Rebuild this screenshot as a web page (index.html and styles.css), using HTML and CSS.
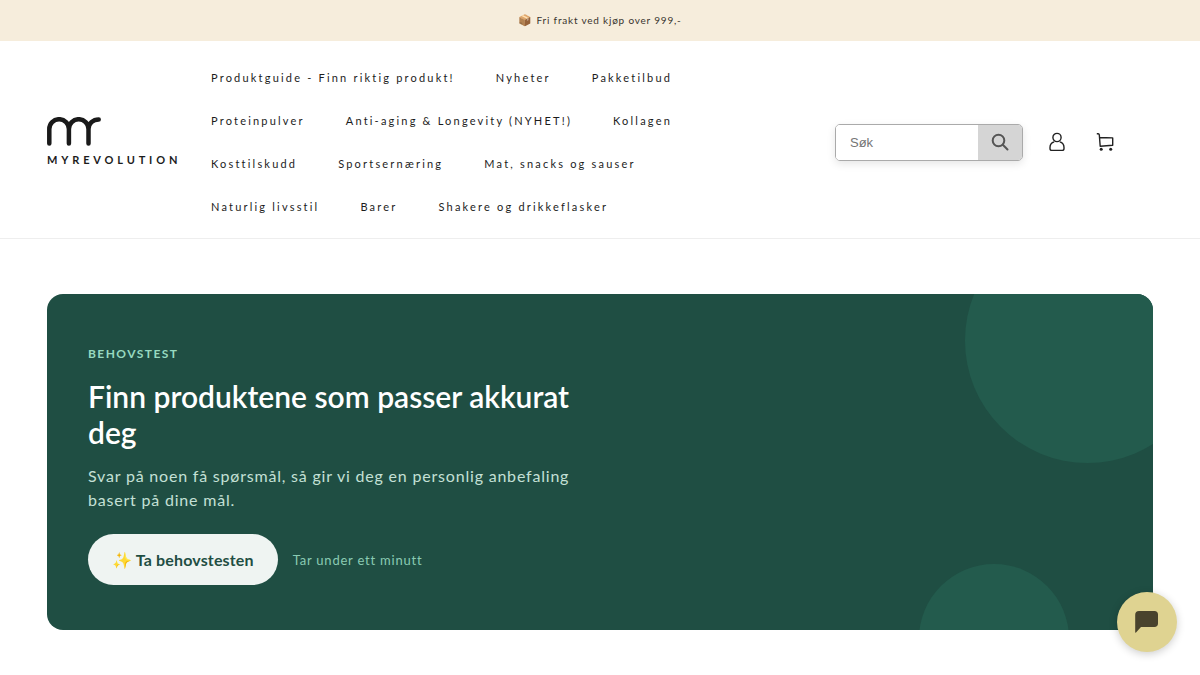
FILE: index.html
```html
<!DOCTYPE html>
<html lang="nb">
<head>
<meta charset="utf-8">
<meta name="viewport" content="width=device-width, initial-scale=1">
<title>MyRevolution</title>
<link rel="stylesheet" href="styles.css">
</head>
<body>
<div class="announcement"><span class="announcement-icon">📦</span> Fri frakt ved kjøp over 999,-</div>
<header class="header">
  <a class="logo" href="#">
    <svg class="logo-mark" viewBox="0 0 54 29" aria-hidden="true"><path d="M2.3 26.5V12a9.8 9.8 0 0 1 19.6 0v14.5M21.9 12a9.8 9.8 0 0 1 19.6 0v14.5M41.5 12c0-5.500 4.500-9.600 10.200-9.600"/></svg>
    <span class="logo-name">MYREVOLUTION</span>
  </a>
  <nav class="nav" aria-label="Hovedmeny">
    <a href="#">Produktguide - Finn riktig produkt!</a>
    <a href="#">Nyheter</a>
    <a href="#">Pakketilbud</a>
    <a href="#">Proteinpulver</a>
    <a href="#">Anti-aging &amp; Longevity (NYHET!)</a>
    <a href="#">Kollagen</a>
    <a href="#">Kosttilskudd</a>
    <a href="#">Sportsernæring</a>
    <a href="#">Mat, snacks og sauser</a>
    <a href="#">Naturlig livsstil</a>
    <a href="#">Barer</a>
    <a href="#">Shakere og drikkeflasker</a>
  </nav>
  <div class="actions">
    <form class="search" role="search">
      <input class="search-input" type="search" placeholder="Søk" aria-label="Søk">
      <button class="search-button" type="submit" aria-label="Utfør søk">
        <svg width="18" height="18" viewBox="0 0 18 18" aria-hidden="true"><circle cx="7.500" cy="7.500" r="5.800"/><path d="m11.800 11.800 4.700 4.700"/></svg>
      </button>
    </form>
    <a class="action" href="#" aria-label="Logg inn">
      <svg width="18" height="20" viewBox="0 0 18 20" aria-hidden="true"><circle cx="9" cy="5.500" r="4.100"/><path d="M6.200 9.900C3.700 10.500 2 13 2 15.600v.9c0 1.200.7 1.900 1.900 1.900h10.200c1.200 0 1.900-.7 1.900-1.900v-.9c0-2.600-1.700-5.100-4.200-5.700"/></svg>
    </a>
    <a class="action" href="#" aria-label="Handlekurv">
      <svg width="18" height="20" viewBox="0 0 18 20" aria-hidden="true"><path d="M.8 1.700h1.400c.7 0 1 .4 1.100 1.100l.9 11.400 12.500-.9V5.900L3.600 5.500"/><circle class="wheel" cx="5.200" cy="17.300" r="1.500"/><circle class="wheel" cx="14.700" cy="17.300" r="1.500"/></svg>
    </a>
  </div>
</header>
<main class="main">
  <section class="hero">
    <div class="hero-content">
      <p class="eyebrow">BEHOVSTEST</p>
      <h1 class="hero-title">Finn produktene som passer akkurat deg</h1>
      <p class="hero-text">Svar på noen få spørsmål, så gir vi deg en personlig anbefaling basert på dine mål.</p>
      <div class="hero-cta">
        <a class="cta" href="#">✨ Ta behovstesten</a>
        <span class="cta-note">Tar under ett minutt</span>
      </div>
    </div>
  </section>
</main>
<button class="chat" type="button" aria-label="Åpne chat">
  <svg width="24" height="22" viewBox="0 0 24 22" aria-hidden="true"><path d="M4 0h15.500c2.200 0 3.500 1.300 3.500 3.500v9c0 2.200-1.300 3.500-3.500 3.500H6l-5 5.500c-.4.400-.8.200-.8-.3V4C.2 1.500 1.500 0 4 0Z"/></svg>
</button>
</body>
</html>
```
FILE: styles.css
```css
* {
  box-sizing: border-box;
}

body {
  margin: 0;
  background: #fff;
  color: #1c1c1c;
  font-family: Lato, "Open Sans", sans-serif;
}

a {
  color: inherit;
  text-decoration: none;
}

p,
h1 {
  margin: 0;
}

.announcement {
  padding: 10px 20px 11px;
  background: #f6eddc;
  color: #38342e;
  font-size: 10px;
  line-height: 20px;
  letter-spacing: 0.08em;
  text-align: center;
}

.announcement-icon {
  font-size: 11px;
}

.header {
  display: grid;
  grid-template-columns: 132px minmax(0, 1fr) auto;
  column-gap: 32px;
  align-items: center;
  padding: 15px 86px 10px 47px;
  border-bottom: 1px solid #eee;
}

.logo {
  display: flex;
  flex-direction: column;
  gap: 7px;
}

.logo-mark {
  width: 54px;
  height: 29px;
  fill: none;
  stroke: #1a1a1a;
  stroke-width: 4.5;
  stroke-linecap: round;
}

.logo-name {
  font-size: 11px;
  font-weight: 700;
  line-height: 14px;
  letter-spacing: 0.35em;
}

.nav {
  display: flex;
  flex-wrap: wrap;
  column-gap: 41px;
  max-width: 520px;
}

.nav a {
  font-size: 11px;
  line-height: 43px;
  letter-spacing: 0.2em;
  white-space: nowrap;
}

.actions {
  display: flex;
  align-items: center;
}

.search {
  display: flex;
  width: 188px;
  height: 37px;
  margin-right: 25px;
  border: 1px solid #aaa;
  border-radius: 5px;
  overflow: hidden;
  box-shadow: 0 3px 8px rgba(0, 0, 0, 0.1);
}

.search-input {
  flex: 1;
  min-width: 0;
  padding: 0 14px;
  border: 0;
  background: #fff;
  font: 13px "Liberation Sans", sans-serif;
}

.search-input::placeholder {
  color: #757575;
}

.search-button {
  display: grid;
  place-items: center;
  width: 44px;
  padding: 0;
  border: 0;
  background: #d5d5d5;
}

.search-button svg {
  fill: none;
  stroke: #555;
  stroke-width: 2;
  stroke-linecap: round;
}

.action {
  display: flex;
}

.action + .action {
  margin-left: 30px;
}

.action svg {
  fill: none;
  stroke: #222;
  stroke-width: 1.4;
  stroke-linejoin: round;
}

.action .wheel {
  fill: #222;
  stroke: none;
}

.main {
  padding: 55px 47px 45px;
}

.hero {
  position: relative;
  overflow: hidden;
  padding: 50px 41px 45px;
  border-radius: 16px;
  background: #1f4e43;
}

.hero::before,
.hero::after {
  content: "";
  position: absolute;
  border-radius: 50%;
  background: #235b4d;
}

.hero::before {
  top: -76px;
  right: -57px;
  width: 245px;
  height: 245px;
}

.hero::after {
  right: 84px;
  bottom: -84px;
  width: 150px;
  height: 150px;
}

.hero-content {
  max-width: 490px;
}

.eyebrow {
  color: #97d9c0;
  font-size: 12px;
  font-weight: 700;
  line-height: 20px;
  letter-spacing: 0.12em;
}

.hero-title {
  margin-top: 14px;
  color: #fff;
  font-size: 30px;
  font-weight: 600;
  line-height: 36px;
}

.hero-text {
  margin-top: 14px;
  color: #c4e0d6;
  font-size: 16px;
  line-height: 24px;
  letter-spacing: 0.05em;
}

.hero-cta {
  display: flex;
  align-items: center;
  gap: 15px;
  margin-top: 22px;
}

.cta {
  padding: 13px 24px;
  border-radius: 26px;
  background: #eff4f2;
  color: #1f4e43;
  font-size: 16px;
  font-weight: 700;
  line-height: 25px;
  letter-spacing: 0.01em;
}

.cta-note {
  color: #8acbb3;
  font-size: 13px;
  letter-spacing: 0.06em;
}

.chat {
  position: fixed;
  right: 23px;
  bottom: 23px;
  display: grid;
  place-items: center;
  width: 60px;
  height: 60px;
  padding: 0;
  border: 0;
  border-radius: 50%;
  background: #dfd391;
  box-shadow: 0 2px 8px rgba(0, 0, 0, 0.2);
}

.chat svg {
  fill: #49432d;
}
```
